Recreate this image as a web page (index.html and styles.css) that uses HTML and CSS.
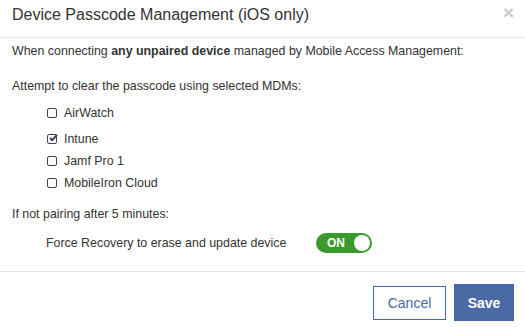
FILE: index.html
```html
<!DOCTYPE html>
<html lang="en">
<head>
  <meta charset="UTF-8" />
  <title>Device Passcode Management</title>
  <link rel="stylesheet" href="styles.css">
</head>
<body>

  <div class="modal">
    <div class="modal-header">
      <h2>Device Passcode Management (iOS only)</h2>
      <button class="close-btn">&times;</button>
    </div>

    <div class="modal-body">
      <p class="intro">When connecting <b>any unpaired device</b> managed by Mobile Access Management:</p>
      <p class="label">Attempt to clear the passcode using selected MDMs:</p>

      <ul class="mdm-list">
        <li><span class="check"></span>AirWatch</li>
        <li><span class="check checked">
          <svg viewBox="0 0 10 10" width="10" height="10"><path d="M2 5 L4.2 7.2 L9 1.8" fill="none" stroke="#2d3a5c" stroke-width="1.8"/></svg>
        </span>Intune</li>
        <li><span class="check"></span>Jamf Pro 1</li>
        <li><span class="check"></span>MobileIron Cloud</li>
      </ul>

      <p class="label">If not pairing after 5 minutes:</p>

      <div class="force-row">
        <span class="force-label">Force Recovery to erase and update device</span>
        <div class="toggle on">
          <span class="toggle-text">ON</span>
          <span class="knob"></span>
        </div>
      </div>
    </div>

    <div class="modal-footer">
      <button class="btn btn-cancel">Cancel</button>
      <button class="btn btn-save">Save</button>
    </div>
  </div>

</body>
</html>
```

FILE: styles.css
```css
* {
  margin: 0; padding: 0;
  box-sizing: border-box;
}

body {
  font-family: "Liberation Sans", Arial, sans-serif;
  font-size: 12.4px;
  color: #333;
  background: #fff;
}

.modal {
  width: 525px;
  height: 327px;
}

/* Header */
.modal-header {
  display: flex;
  justify-content: space-between;
  align-items: flex-start;
  height: 38px;
  padding: 5px 11px 0 12px;
  border-bottom: 1px solid #e5e5e5;
}

.modal-header h2 {
  font-size: 16px;
  font-weight: normal;
  line-height: 20px;
  color: #333;
}

.close-btn {
  background: none;
  border: none;
  font-family: "Liberation Sans", Arial, sans-serif;
  font-size: 19px;
  font-weight: bold;
  line-height: 16px;
  color: #c8c8c8;
  cursor: pointer;
}

/* Body */
.modal-body {
  padding: 5px 12px 0;
}

.modal-body p {
  line-height: 16px;
}

.intro {
  margin-bottom: 19px;
}

.label {
  margin-bottom: 11px;
}

.mdm-list {
  list-style: none;
  padding-left: 35px;
  margin-bottom: 15px;
}

.mdm-list li {
  display: flex;
  align-items: center;
  height: 16px;
  margin-bottom: 6px;
}

.mdm-list li:first-child {
  margin-bottom: 10px;
}

.mdm-list li:last-child {
  margin-bottom: 0;
}

.check {
  position: relative;
  width: 10px;
  height: 10px;
  border: 1px solid #444;
  border-radius: 2px;
  margin-right: 7px;
}

.check svg {
  position: absolute;
  left: 0;
  top: -2px;
}

.force-row {
  display: flex;
  align-items: center;
  margin-top: 10px;
  padding-left: 34px;
}

.force-label {
  width: 270px;
}

.toggle {
  position: relative;
  width: 56px;
  height: 20px;
  border-radius: 10px;
  background-color: #3b9a2e;
  color: white;
}

.toggle-text {
  position: absolute;
  left: 11px;
  top: 3px;
  font-size: 12px;
  font-weight: bold;
  line-height: 14px;
}

.knob {
  position: absolute;
  right: 2px;
  top: 2px;
  width: 16px;
  height: 16px;
  border-radius: 50%;
  background: white;
}

/* Footer */
.modal-footer {
  display: flex;
  justify-content: flex-end;
  align-items: center;
  gap: 8px;
  margin-top: 18px;
  padding: 12px 11px;
  border-top: 1px solid #e5e5e5;
}

.btn {
  font-family: "Liberation Sans", Arial, sans-serif;
  font-size: 14px;
  cursor: pointer;
}

.btn-cancel {
  width: 73px;
  height: 34px;
  background: white;
  border: 1px solid #4a6aa5;
  color: #4a6aa5;
}

.btn-save {
  width: 60px;
  height: 37px;
  background-color: #4a6aa5;
  border: none;
  color: white;
  font-weight: bold;
}
```
